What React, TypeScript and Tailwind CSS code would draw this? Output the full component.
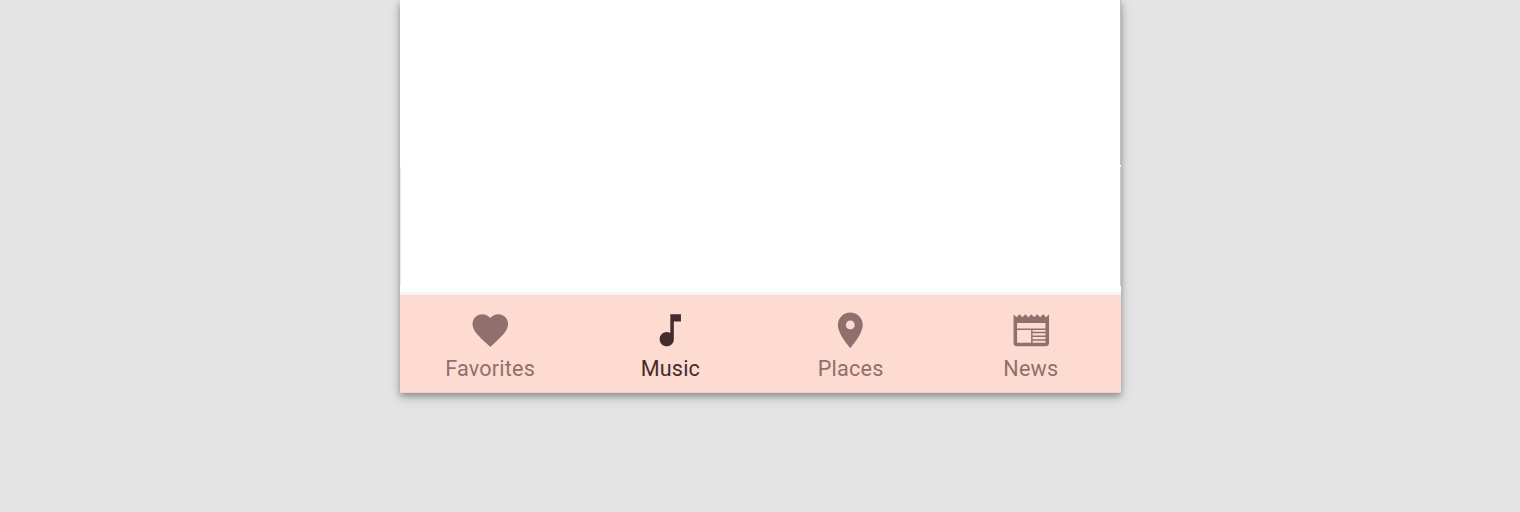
import type { ReactNode } from 'react';

type Destination = { label: string; active?: boolean; icon: ReactNode };

const destinations: Destination[] = [
  {
    label: 'Favorites',
    icon: (
      <path d="M12 21.35l-1.45-1.32C5.4 15.36 2 12.28 2 8.5 2 5.42 4.42 3 7.5 3c1.74 0 3.41.81 4.5 2.09C13.09 3.81 14.76 3 16.5 3 19.58 3 22 5.42 22 8.5c0 3.78-3.4 6.86-8.55 11.54L12 21.35z" />
    ),
  },
  {
    label: 'Music',
    active: true,
    icon: <path d="M12 3v10.55c-.59-.34-1.27-.55-2-.55-2.21 0-4 1.79-4 4s1.79 4 4 4 4-1.79 4-4V7h4V3z" />,
  },
  {
    label: 'Places',
    icon: (
      <path d="M12 2C8.13 2 5 5.13 5 9c0 5.25 7 13 7 13s7-7.75 7-13c0-3.87-3.13-7-7-7zm0 9.5c-1.38 0-2.5-1.12-2.5-2.5s1.12-2.5 2.5-2.5 2.5 1.12 2.5 2.5-1.12 2.5-2.5 2.5z" />
    ),
  },
  {
    label: 'News',
    icon: (
      <path
        fillRule="evenodd"
        d="M2 3l1.67 1.67L5.33 3 7 4.67 8.67 3l1.66 1.67L12 3l1.67 1.67L15.33 3 17 4.67 18.67 3l1.66 1.67L22 3v16a2 2 0 0 1-2 2H4a2 2 0 0 1-2-2zM4 7.9v3.1h16V7.9zM4 11.9v7.1h7.9v-7.1zM12.7 11.9v.9H20v-.9zM12.7 13.7v1.3H20v-1.3zM12.7 15.8v1.3H20v-1.3zM12.7 17.9v1.1H20v-1.1z"
      />
    ),
  },
];

export default function App() {
  return (
    <div className="flex h-[512px] w-full justify-center overflow-hidden bg-[#e4e4e4] pl-px">
      <main className="flex h-[393px] w-[721px] flex-col bg-white shadow-[0_3px_6px_rgba(0,0,0,0.28),0_4px_12px_rgba(0,0,0,0.17)]">
        <section className="flex flex-1 flex-col items-end">
          <div className="h-[165px] w-px bg-[#bebebe]" />
          <div className="h-0.5 w-px bg-white" />
          <div className="flex h-[119px] w-full justify-between">
            <div className="w-px bg-[#ebebeb]" />
            <div className="w-px bg-[#cacaca]" />
          </div>
          <div className="w-full flex-1 bg-linear-to-b from-white from-40% to-[#f3f3f3]" />
        </section>
        <nav className="grid h-[98px] grid-cols-4 border-b border-[#f3cfc5] bg-[#fddbd0]">
          {destinations.map(({ label, active, icon }) => (
            <a
              key={label}
              className={`flex flex-col items-center pt-[13.5px] font-['Roboto',sans-serif] text-[21.6px] leading-[30px] font-normal tracking-[0.2px] ${
                active ? 'text-[#442c2e]' : 'text-[#8f706d]'
              }`}
            >
              <svg viewBox="0 0 24 24" className="h-[42.6px] w-[42.6px] shrink-0 fill-current" aria-hidden="true">
                {icon}
              </svg>
              <span className="mt-[2.5px]">{label}</span>
            </a>
          ))}
        </nav>
      </main>
    </div>
  );
}
